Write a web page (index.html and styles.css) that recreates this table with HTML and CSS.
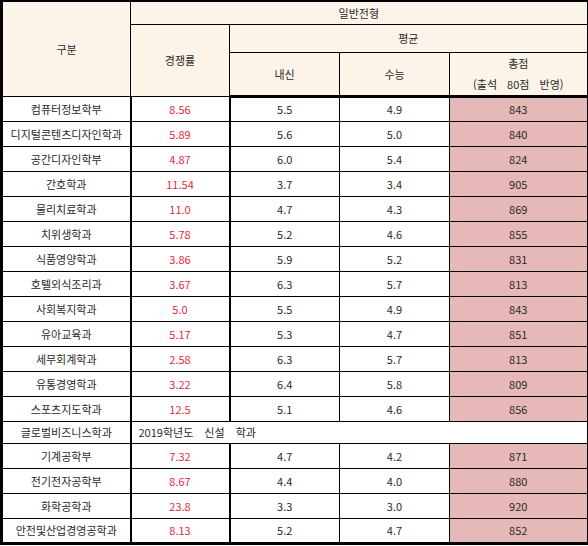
FILE: index.html
```html
<!DOCTYPE html>
<html lang="ko">
    <head>
        <meta charset="UTF-8">
        <meta name="viewport" content="width=device-width, initial-scale=1.0">
        <title>일반전형 경쟁률</title>
        <link rel="stylesheet" href="styles.css">
    </head>
    <body>
        <table class="score">
            <colgroup>
                <col class="c-dept">
                <col class="c-rate">
                <col class="c-avg">
                <col class="c-avg2">
                <col class="c-total">
            </colgroup>
            <thead>
                <tr class="h1">
                    <th rowspan="3" class="dept-head">구분</th>
                    <th colspan="4" class="group">일반전형</th>
                </tr>
                <tr class="h2">
                    <th rowspan="2" class="rate-head">경쟁률</th>
                    <th colspan="3" class="avg-head">평균</th>
                </tr>
                <tr class="h3">
                    <th>내신</th>
                    <th>수능</th>
                    <th class="total-head">총점<br>(출석 80점 반영)</th>
                </tr>
            </thead>
            <tbody>
                <tr><td>컴퓨터정보학부</td><td class="rate">8.56</td><td>5.5</td><td>4.9</td><td class="total">843</td></tr>
                <tr><td>디지털콘텐츠디자인학과</td><td class="rate">5.89</td><td>5.6</td><td>5.0</td><td class="total">840</td></tr>
                <tr><td>공간디자인학부</td><td class="rate">4.87</td><td>6.0</td><td>5.4</td><td class="total">824</td></tr>
                <tr><td>간호학과</td><td class="rate">11.54</td><td>3.7</td><td>3.4</td><td class="total">905</td></tr>
                <tr><td>물리치료학과</td><td class="rate">11.0</td><td>4.7</td><td>4.3</td><td class="total">869</td></tr>
                <tr><td>치위생학과</td><td class="rate">5.78</td><td>5.2</td><td>4.6</td><td class="total">855</td></tr>
                <tr><td>식품영양학과</td><td class="rate">3.86</td><td>5.9</td><td>5.2</td><td class="total">831</td></tr>
                <tr><td>호텔외식조리과</td><td class="rate">3.67</td><td>6.3</td><td>5.7</td><td class="total">813</td></tr>
                <tr><td>사회복지학과</td><td class="rate">5.0</td><td>5.5</td><td>4.9</td><td class="total">843</td></tr>
                <tr><td>유아교육과</td><td class="rate">5.17</td><td>5.3</td><td>4.7</td><td class="total">851</td></tr>
                <tr><td>세무회계학과</td><td class="rate">2.58</td><td>6.3</td><td>5.7</td><td class="total">813</td></tr>
                <tr><td>유통경영학과</td><td class="rate">3.22</td><td>6.4</td><td>5.8</td><td class="total">809</td></tr>
                <tr><td>스포츠지도학과</td><td class="rate">12.5</td><td>5.1</td><td>4.6</td><td class="total">856</td></tr>
                <tr class="new"><td>글로벌비즈니스학과</td><td colspan="4" class="note">2019학년도 신설 학과</td></tr>
                <tr><td>기계공학부</td><td class="rate">7.32</td><td>4.7</td><td>4.2</td><td class="total">871</td></tr>
                <tr><td>전기전자공학부</td><td class="rate">8.67</td><td>4.4</td><td>4.0</td><td class="total">880</td></tr>
                <tr><td>화학공학과</td><td class="rate">23.8</td><td>3.3</td><td>3.0</td><td class="total">920</td></tr>
                <tr class="last"><td>안전및산업경영공학과</td><td class="rate">8.13</td><td>5.2</td><td>4.7</td><td class="total">852</td></tr>
            </tbody>
        </table>
    </body>
</html>
```

FILE: styles.css
```css
body {
    margin: 0;
    background: #fff;
}
.score {
    width: 588px;
    table-layout: fixed;
    border-collapse: collapse;
    font-family: "Noto Sans CJK KR", "Noto Sans", sans-serif;
    font-size: 11px;
    line-height: 14px;
    color: #2a2a2a;
    border-top: 2px solid #000;
    border-left: 3px solid #000;
    border-right: 2px solid #000;
    border-bottom: 3px solid #000;
}
.c-dept { width: 129px; }
.c-rate { width: 99px; }
.c-avg { width: 110px; }
.c-avg2 { width: 110px; }
.c-total { width: 138px; }

.score th,
.score td {
    padding: 0;
    text-align: center;
    vertical-align: middle;
    border: 1px solid #000;
    white-space: nowrap;
}
.score th {
    font-weight: normal;
    background: #fcf4e8;
}

/* header */
.h1 { height: 23px; }
.h2 { height: 28px; }
.h3 { height: 43px; }
.dept-head { border-right: 2px solid #000; }
.group { border-bottom: 2px solid #000; }
.rate-head { border-right: 2px solid #000; }
.total-head {
    line-height: 21px;
    word-spacing: 7px;
}
.score thead tr:last-child th,
.dept-head,
.rate-head {
    border-bottom: 3px solid #000;
}

/* body */
.score tbody tr { height: 25px; }
.score tbody tr.new { height: 22px; }
.score tbody td:first-child { border-right: 2px solid #000; }
.score tbody td.rate {
    color: #e3293b;
    border-right: 2px solid #000;
}
.score td.total { background: #e6b8b7; }
.score td.note {
    text-align: left;
    padding-left: 7px;
    word-spacing: 8px;
}
```
